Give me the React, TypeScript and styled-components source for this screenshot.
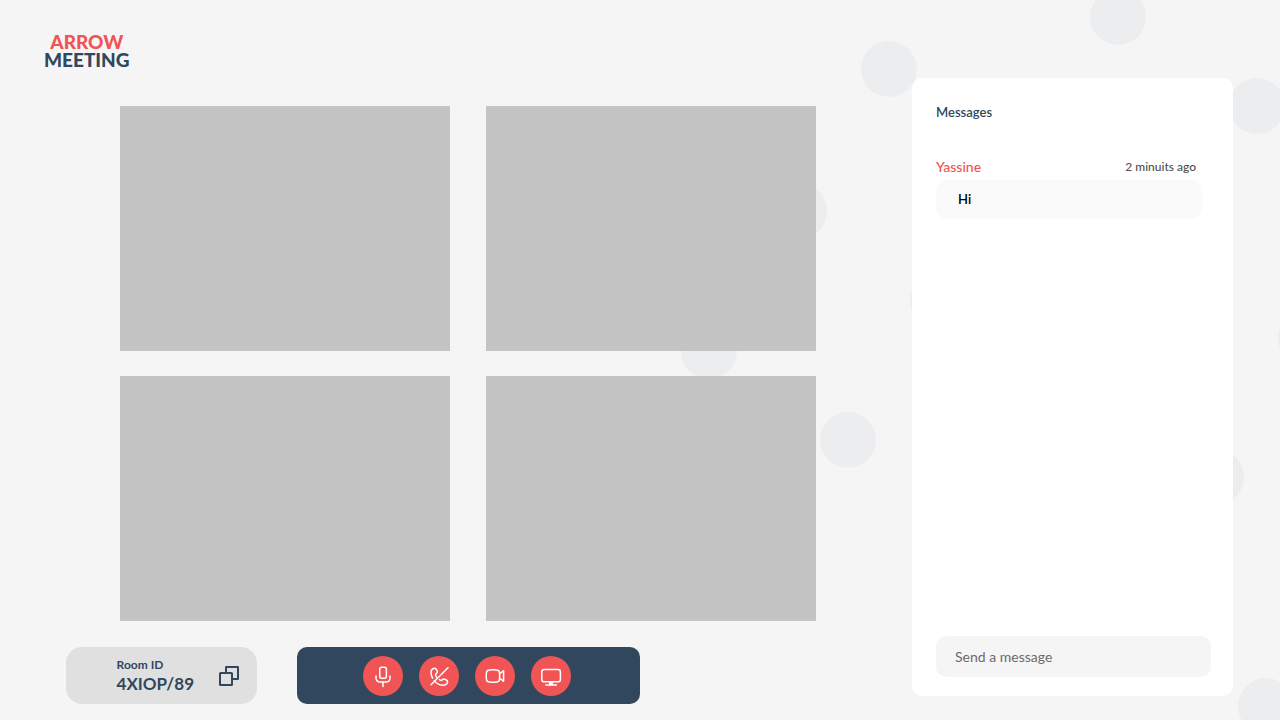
import React from "react";
import styled, { createGlobalStyle } from "styled-components";

const navy = "#30475e";
const coral = "#f05454";

const GlobalStyle = createGlobalStyle`
  *, *::before, *::after { box-sizing: border-box; }
  body {
    margin: 0;
    background: #f5f5f5;
    color: ${navy};
    font-family: Lato, "Open Sans", sans-serif;
  }
  button, input { font: inherit; }
`;

const Page = styled.div`
  position: relative;
  display: grid;
  grid-template-columns: minmax(0, 1fr) 321px;
  min-height: 100vh;
  padding-right: 47px;
  overflow: hidden;
`;

const Backdrop = styled.div`
  position: absolute;
  inset: 0;
  pointer-events: none;
`;

const Bubble = styled.span<{ $x: number; $y: number }>`
  position: absolute;
  left: ${(p) => p.$x}px;
  top: ${(p) => p.$y}px;
  width: 56px;
  height: 56px;
  border-radius: 50%;
  background: #ecedef;
`;

const Main = styled.main`
  position: relative;
  display: flex;
  flex-direction: column;
`;

const Header = styled.header`
  display: flex;
  padding: 33px 44px 37px;
`;

const Logo = styled.h1`
  display: flex;
  flex-direction: column;
  align-items: center;
  margin: 0;
  font-size: 19px;
  font-weight: 900;
  line-height: 18px;
`;

const LogoAccent = styled.span`
  color: ${coral};
`;

const VideoGrid = styled.section`
  display: grid;
  grid-template-columns: 1fr 1fr;
  gap: 25px 36px;
  padding: 0 96px 0 120px;
`;

const VideoTile = styled.div`
  aspect-ratio: 330 / 245;
  background: #c4c4c4;
`;

const Footer = styled.footer`
  display: flex;
  gap: 40px;
  margin-top: auto;
  padding: 26px 66px 16px;
`;

const RoomCard = styled.div`
  display: flex;
  align-items: center;
  justify-content: flex-end;
  gap: 24px;
  width: 191px;
  height: 57px;
  padding-right: 15px;
  border-radius: 16px;
  background: #e0e0e0;
`;

const RoomText = styled.div`
  display: flex;
  flex-direction: column;
`;

const RoomLabel = styled.span`
  font-size: 12px;
  font-weight: 700;
  line-height: 16px;
`;

const RoomCode = styled.span`
  font-size: 17px;
  font-weight: 700;
  line-height: 22px;
`;

const CopyButton = styled.button`
  display: flex;
  padding: 0;
  border: 0;
  background: none;
  color: ${navy};
  cursor: pointer;
`;

const Controls = styled.div`
  display: flex;
  align-items: center;
  justify-content: center;
  gap: 16px;
  width: 343px;
  height: 57px;
  padding-right: 3px;
  border-radius: 10px;
  background: ${navy};
`;

const ControlButton = styled.button`
  display: flex;
  width: 40px;
  height: 40px;
  padding: 0;
  border: 0;
  border-radius: 50%;
  background: ${coral};
  color: #fff;
  cursor: pointer;
`;

const Chat = styled.aside`
  position: relative;
  display: flex;
  flex-direction: column;
  margin: 78px 0 24px;
  padding: 24px 22px 19px 24px;
  border-radius: 10px;
  background: #fff;
`;

const ChatTitle = styled.h2`
  margin: 0 0 35px;
  font-size: 13px;
  font-weight: 600;
  line-height: 20px;
`;

const MessageList = styled.ul`
  flex: 1;
  margin: 0;
  padding: 0 9px 0 0;
  list-style: none;
`;

const MessageMeta = styled.div`
  display: flex;
  justify-content: space-between;
  padding-right: 6px;
  line-height: 20px;
`;

const Author = styled.span`
  color: ${coral};
  font-size: 14px;
  font-weight: 500;
`;

const Time = styled.time`
  color: #4f4f4f;
  font-size: 12px;
  font-weight: 500;
`;

const MessageBody = styled.p`
  margin: 3px 0 0;
  padding: 9px 22px 10px;
  border-radius: 10px;
  background: #fafafa;
  color: #000;
  font-size: 13px;
  font-weight: 600;
  line-height: 20px;
`;

const Composer = styled.form`
  display: flex;
`;

const MessageInput = styled.input`
  width: 100%;
  height: 41px;
  padding: 0 19px;
  border: 0;
  border-radius: 10px;
  background: #f5f5f5;
  color: ${navy};
  font-size: 14px;
  &::placeholder { color: #6b6b6b; opacity: 1; }
`;

const bubbles = [
  [861, 41], [1090, -11], [1229, 78], [771, 183], [681, 323],
  [820, 412], [1188, 449], [1238, 678], [910, 272], [1278, 310],
];

const Glyph = ({ children }: { children: React.ReactNode }) => (
  <svg width="40" height="40" viewBox="0 0 40 40" fill="none" stroke="currentColor"
    strokeWidth="1.5" strokeLinecap="round" strokeLinejoin="round" aria-hidden="true">
    {children}
  </svg>
);

const controls = [
  {
    label: "Mute microphone",
    icon: (
      <>
        <rect x="16.8" y="11.2" width="6.6" height="11" rx="2" />
        <path d="M13 20v2.2a3.8 3.8 0 0 0 3.8 3.8h6.4a3.8 3.8 0 0 0 3.8-3.8V20M20 26v4.6" />
      </>
    ),
  },
  {
    label: "Leave call",
    icon: (
      <>
        <path d="M15.2 24.6 C17.2 27.2 20.6 29 23.6 29.2 C26.2 29.4 28.6 28 28.6 26 C28.6 24.8 27.6 24 26.4 23.5 C25 22.8 24 22.8 23.2 23.8 C22.4 24.8 21.2 24.2 20.4 23.6" />
        <path d="M13.6 22.2 C12.2 19.4 11.6 16.4 12.4 14.4 C13.2 12.6 15.4 11.6 16.6 12.6 C17.4 13.3 18.2 14.8 18.4 15.8 C18.6 17.1 16.6 17.6 16.6 18.8 C16.6 19.6 17 20.4 17.6 21.2" />
        <path d="M29 11.8 12 28.8" />
      </>
    ),
  },
  {
    label: "Turn off camera",
    icon: (
      <>
        <path d="M14.5 13.9 Q18 13.4 21.5 13.9 Q24.4 14.1 24.5 16.8 Q24.8 20 24.5 23.2 Q24.4 25.9 21.5 26.1 Q18 26.5 14.5 26.1 Q11.6 25.9 11.4 23.2 Q11.1 20 11.4 16.8 Q11.6 14.1 14.5 13.9Z" />
        <path d="M24.8 17.6 28.6 14.7 V25.3 L24.8 22.4" />
      </>
    ),
  },
  {
    label: "Share screen",
    icon: (
      <>
        <rect x="10.8" y="13.4" width="18.6" height="12.4" rx="2.4" />
        <path d="M14.8 29h10.6" />
        <path d="M18.8 26v2.6h2.6v-2.6" fill="currentColor" />
      </>
    ),
  },
];

export default function App() {
  return (
    <>
      <GlobalStyle />
      <Page>
        <Backdrop aria-hidden="true">
          {bubbles.map(([x, y]) => (
            <Bubble key={`${x}-${y}`} $x={x} $y={y} />
          ))}
        </Backdrop>
        <Main>
          <Header>
            <Logo>
              <LogoAccent>ARROW</LogoAccent>
              <span>MEETING</span>
            </Logo>
          </Header>
          <VideoGrid aria-label="Participants">
            <VideoTile />
            <VideoTile />
            <VideoTile />
            <VideoTile />
          </VideoGrid>
          <Footer>
            <RoomCard>
              <RoomText>
                <RoomLabel>Room ID</RoomLabel>
                <RoomCode>4XIOP/89</RoomCode>
              </RoomText>
              <CopyButton type="button" aria-label="Copy room ID">
                <svg width="24" height="24" viewBox="0 0 24 24" fill="none" stroke="currentColor"
                  strokeWidth="2" strokeLinejoin="round" aria-hidden="true">
                  <rect x="2" y="9" width="12" height="12" rx="0.5" />
                  <path d="M8 9V3h12v12h-6" />
                </svg>
              </CopyButton>
            </RoomCard>
            <Controls>
              {controls.map(({ label, icon }) => (
                <ControlButton key={label} type="button" aria-label={label}>
                  <Glyph>{icon}</Glyph>
                </ControlButton>
              ))}
            </Controls>
          </Footer>
        </Main>
        <Chat>
          <ChatTitle>Messages</ChatTitle>
          <MessageList>
            <li>
              <MessageMeta>
                <Author>Yassine</Author>
                <Time>2 minuits ago</Time>
              </MessageMeta>
              <MessageBody>Hi</MessageBody>
            </li>
          </MessageList>
          <Composer onSubmit={(e) => e.preventDefault()}>
            <MessageInput type="text" aria-label="Send a message" placeholder="Send a message" />
          </Composer>
        </Chat>
      </Page>
    </>
  );
}
